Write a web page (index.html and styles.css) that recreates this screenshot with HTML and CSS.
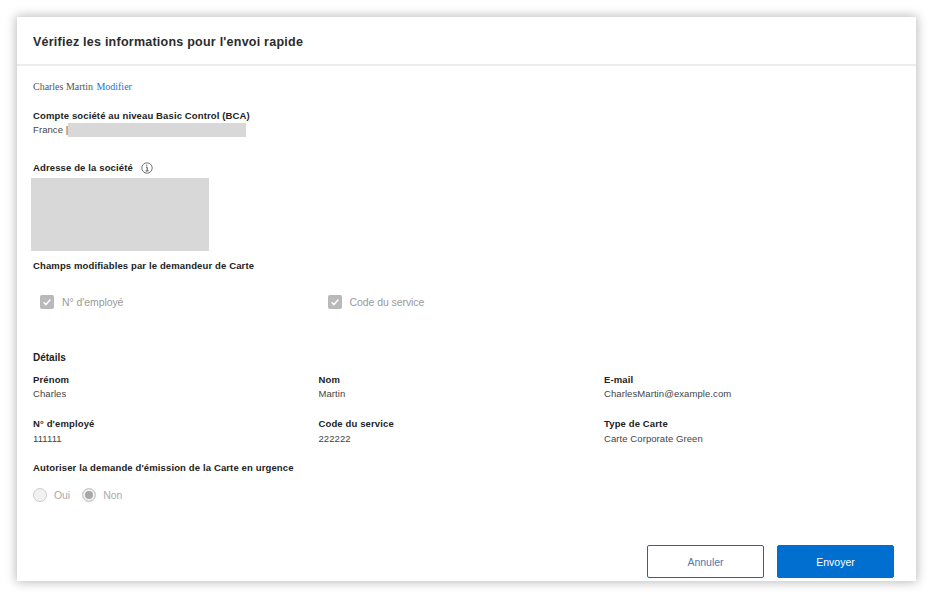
FILE: index.html
```html
<!DOCTYPE html>
<html lang="fr">
<head>
<meta charset="utf-8">
<title>Envoi rapide</title>
<link rel="stylesheet" href="styles.css">
</head>
<body>
<main class="card">
  <header class="head"><h1>Vérifiez les informations pour l'envoi rapide</h1></header>
  <div class="content">
    <p class="requester">Charles Martin <a href="#">Modifier</a></p>
    <section class="account">
      <div class="label">Compte société au niveau Basic Control (BCA)</div>
      <div class="value account-row">France |<span class="mask-line"></span></div>
    </section>
    <section class="address">
      <div class="label address-label">Adresse de la société
        <svg class="info" viewBox="0 0 12 12" width="12" height="12"><circle cx="6" cy="6" r="5.2" fill="none" stroke="#666" stroke-width=".9"/><path d="M5 3.2h1.3M5 5.2h1.2v3.5M4.6 8.9h3" fill="none" stroke="#555" stroke-width="1"/></svg>
      </div>
      <div class="mask-block"></div>
    </section>
    <div class="label editable">Champs modifiables par le demandeur de Carte</div>
    <div class="checks">
      <div class="check"><span class="box"><svg viewBox="0 0 14 14" width="14" height="14"><path d="M3.6 7.3l2.3 2.3 4.5-5" fill="none" stroke="#fff" stroke-width="1.5"/></svg></span>N° d'employé</div>
      <div class="check"><span class="box"><svg viewBox="0 0 14 14" width="14" height="14"><path d="M3.6 7.3l2.3 2.3 4.5-5" fill="none" stroke="#fff" stroke-width="1.5"/></svg></span>Code du service</div>
    </div>
    <h2>Détails</h2>
    <div class="grid">
      <div><div class="label">Prénom</div><div class="value">Charles</div></div>
      <div><div class="label">Nom</div><div class="value">Martin</div></div>
      <div><div class="label">E-mail</div><div class="value">CharlesMartin@example.com</div></div>
      <div><div class="label">N° d'employé</div><div class="value">111111</div></div>
      <div><div class="label">Code du service</div><div class="value">222222</div></div>
      <div><div class="label">Type de Carte</div><div class="value">Carte Corporate Green</div></div>
    </div>
    <div class="label urgent">Autoriser la demande d'émission de la Carte en urgence</div>
    <div class="radios">
      <div class="radio"><span class="dot"></span>Oui</div>
      <div class="radio"><span class="dot on"></span>Non</div>
    </div>
  </div>
  <footer class="actions">
    <button class="btn ghost" type="button">Annuler</button>
    <button class="btn primary" type="button">Envoyer</button>
  </footer>
</main>
</body>
</html>
```
FILE: styles.css
```css
* { box-sizing: border-box; }
html, body { margin: 0; height: 100%; background: #fff; }
body {
  padding: 17px 20px 17px 17px;
  font-family: "Liberation Sans", Arial, sans-serif;
  color: #333;
  overflow: hidden;
}
.card {
  width: 899px;
  height: 564px;
  background: #fff;
  box-shadow: 0 0 10px 1px rgba(0, 0, 0, .28);
  display: flex;
  flex-direction: column;
}
.head {
  height: 49px;
  border-bottom: 2px solid #ececec;
  padding: 17px 16px 0;
}
h1 { margin: 0; font-size: 12.5px; line-height: 16px; font-weight: 700; color: #2b2b2b; letter-spacing: .24px; }
.content { flex: 1; padding: 15px 16px 0; }
.requester {
  margin: 0;
  font-family: "Liberation Serif", "Times New Roman", serif;
  font-size: 10px;
  line-height: 12px;
  color: #555;
  letter-spacing: -.02px;
}
.requester a { color: #1a73d0; text-decoration: none; margin-left: 1px; }
.label { font-size: 9.5px; line-height: 14px; font-weight: 700; color: #222; letter-spacing: .13px; }
.value { font-size: 9.5px; line-height: 14px; color: #444; letter-spacing: .08px; }
.account { margin-top: 16px; }
.account-row { display: flex; align-items: center; }
.mask-line { width: 178px; height: 14px; background: #d8d8d8; }
.address { margin-top: 24px; }
.address-label { display: flex; align-items: center; gap: 8px; }
.info { flex: none; }
.mask-block { width: 178px; height: 73px; background: #d8d8d8; margin: 3px 0 0 -2px; }
.editable { margin-top: 8px; }
.checks { display: flex; margin: 22px 0 0 7px; }
.check { width: 287.5px; display: flex; align-items: center; gap: 8px; font-size: 10.5px; letter-spacing: -.07px; line-height: 14px; color: #999; }
.box { width: 14px; height: 14px; background: #b9b9b9; border-radius: 2px; display: block; }
.box svg { display: block; }
h2 { margin: 41px 0 0; padding-top: 1px; font-size: 10px; line-height: 14px; font-weight: 700; color: #222; }
.grid { display: grid; grid-template-columns: repeat(3, 285.5px); row-gap: 16px; margin-top: 8px; }
.grid > div:nth-child(n+4) .value { padding-top: 1px; }
.urgent { margin-top: 15px; }
.radios { display: flex; gap: 12px; margin-top: 13px; }
.radio { display: flex; align-items: center; gap: 7px; font-size: 10.5px; letter-spacing: -.07px; line-height: 14px; color: #aaa; }
.dot { width: 14px; height: 14px; border-radius: 50%; background: #f1f1f1; border: 1px solid #ccc; display: block; }
.dot.on { background: #a8a8a8; box-shadow: inset 0 0 0 2px #f1f1f1; }
.actions { display: flex; justify-content: flex-end; gap: 13px; padding: 0 22px 3px 0; }
.btn { width: 117px; height: 33px; border-radius: 2px; font: 10.5px "Liberation Sans", Arial, sans-serif; padding: 0; }
.ghost { background: #fff; border: 1px solid #006fcf; color: #4a78b0; }
.primary { background: #006fcf; border: 1px solid #006fcf; color: #fff; }
```
